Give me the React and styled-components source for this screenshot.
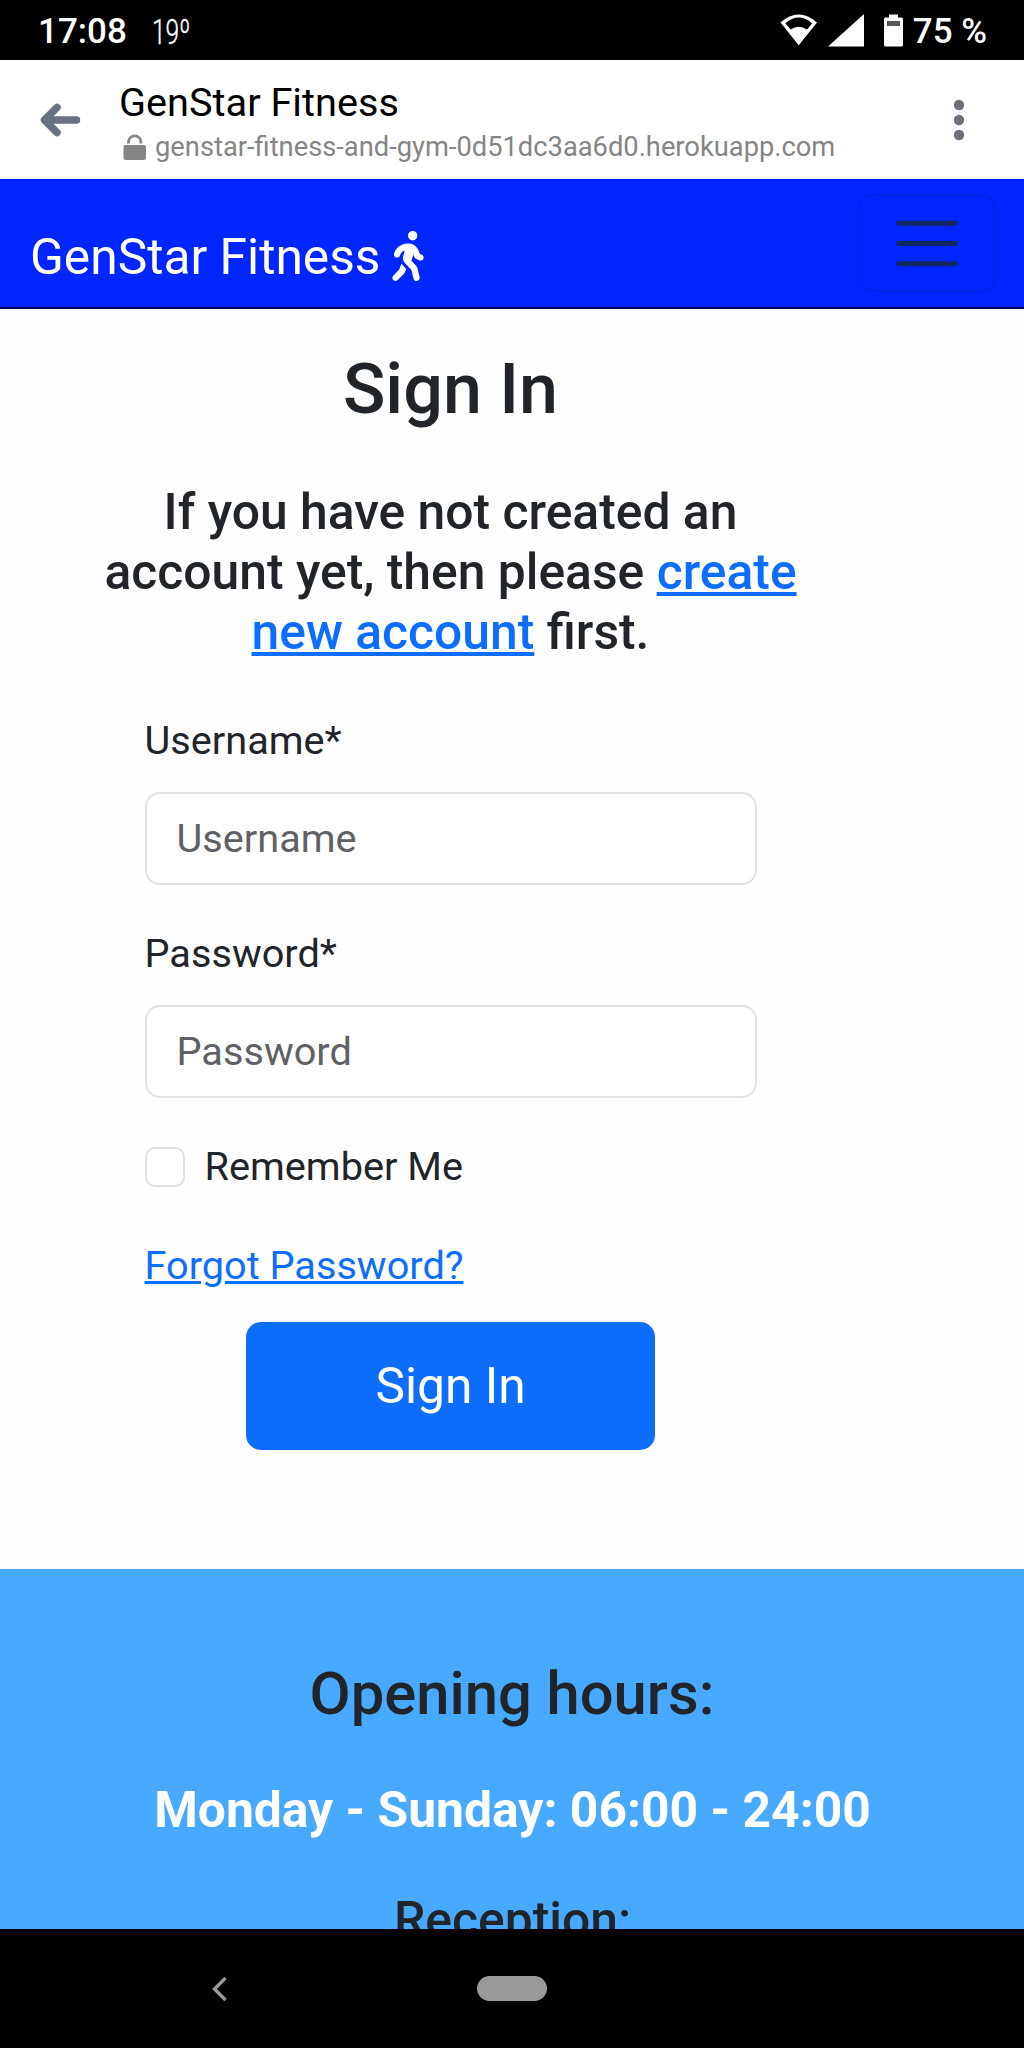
import React from "react";
import styled, { createGlobalStyle } from "styled-components";
import { FaPersonWalking } from "react-icons/fa6";

const GlobalStyle = createGlobalStyle`
  *, *::before, *::after { box-sizing: border-box; }
  body { margin: 0; background: #fefefe; font-family: Roboto, "Liberation Sans", sans-serif; color: #212529; }
  h1, h2, h3, p { margin: 0; font-weight: 500; }
`;

const Screen = styled.div`
  width: 1024px;
  height: 2048px;
  display: flex;
  flex-direction: column;
  overflow: hidden;
  background: #fefefe;
`;

const StatusBar = styled.div`
  height: 60px;
  flex: none;
  display: flex;
  align-items: center;
  justify-content: space-between;
  padding: 4px 37px 0 38px;
  background: #000;
  color: #fff;
`;

const StatusGroup = styled.div`
  display: flex;
  align-items: center;
`;

const Clock = styled.span`
  font-size: 35px;
  font-weight: 500;
  line-height: 42px;
`;

const Temperature = styled.span`
  margin-left: 25px;
  font-size: 34.5px;
  font-weight: 300;
  line-height: 42px;
  -webkit-text-stroke: 0.4px #fff;
  transform: scaleX(0.71);
  transform-origin: left;
`;

const Percent = styled.span`
  margin-left: 9px;
  font-size: 35px;
  font-weight: 500;
  line-height: 42px;
`;

const StatusIcons = styled.svg`
  display: block;
  margin-top: -5px;
`;

const BrowserBar = styled.header`
  height: 119px;
  flex: none;
  display: flex;
  align-items: center;
  padding: 0 59px 0 38px;
  background: #fff;
`;

const PageInfo = styled.div`
  flex: 1;
  margin-left: 37px;
  padding-top: 9px;
`;

const PageTitle = styled.div`
  color: #000;
  font-size: 39.7px;
  line-height: 46px;
`;

const PageAddress = styled.div`
  display: flex;
  align-items: center;
  gap: 9px;
  padding-left: 4px;
  color: #858585;
  font-size: 27.3px;
  line-height: 42px;
`;

const Navbar = styled.nav`
  height: 130px;
  flex: none;
  display: flex;
  align-items: flex-start;
  justify-content: space-between;
  padding: 15px 28px 0 30px;
  background: #0026ff;
  border-bottom: 2px solid #00055c;
`;

const Brand = styled.a`
  display: flex;
  align-items: center;
  gap: 3px;
  margin-top: 27px;
  color: #fff;
  font-size: 49.7px;
  line-height: 72px;

  svg { margin-top: -3px; }
`;

const MenuButton = styled.button`
  width: 138px;
  height: 98px;
  padding: 0;
  display: flex;
  align-items: center;
  justify-content: center;
  background: transparent;
  border: 2px solid rgba(0, 0, 60, 0.13);
  border-radius: 15px;
`;

const Main = styled.main`
  height: 1260px;
  flex: none;
  width: 901px;
  padding: 38px 90px 0;
  display: flex;
  flex-direction: column;
  align-items: center;
`;

const Heading = styled.h1`
  font-size: 70px;
  line-height: 84px;
`;

const Intro = styled.h3`
  width: 720px;
  margin-top: 52px;
  text-align: center;
  font-size: 49.8px;
  line-height: 59.8px;
`;

const Link = styled.a`
  color: #0d6efd;
  text-decoration: underline;
`;

const Form = styled.form`
  width: 612px;
  margin-top: 50px;
  display: flex;
  flex-direction: column;
  font-size: 39.7px;
  line-height: 58.6px;
`;

const Field = styled.label`
  display: flex;
  flex-direction: column;
  gap: 21px;
  margin-bottom: 40px;
`;

const Input = styled.input`
  height: 93px;
  padding: 0 30px;
  border: 2px solid #e1e2e4;
  border-radius: 15px;
  background: #fff;
  font: inherit;
  &::placeholder { color: #5f6164; opacity: 1; }
`;

const CheckRow = styled.label`
  display: flex;
  align-items: center;
  gap: 20px;
`;

const CheckBox = styled.span`
  width: 40px;
  height: 40px;
  border: 2px solid #e1e2e4;
  border-radius: 10px;
  background: #fff;
`;

const ForgotLink = styled(Link)`
  align-self: flex-start;
  margin-top: 41px;
`;

const SubmitButton = styled.button`
  align-self: center;
  width: 409px;
  height: 128px;
  margin-top: 26px;
  padding: 0;
  border: 0;
  border-radius: 15px;
  background: #0d6efd;
  color: #fff;
  font: 400 49.7px Roboto, "Liberation Sans", sans-serif;
`;

const Footer = styled.footer`
  height: 360px;
  flex: none;
  padding-top: 90px;
  overflow: hidden;
  text-align: center;
  background: #47a9ff;
`;

const FooterTitle = styled.h2`
  font-size: 59.7px;
  line-height: 70px;
`;

const Hours = styled.p`
  margin-top: 51px;
  padding-left: 1px;
  color: #fff;
  font-size: 49.8px;
  font-weight: 700;
  line-height: 60px;
`;

const FooterSubtitle = styled.h3`
  margin-top: 50px;
  padding-left: 1px;
  font-size: 49.8px;
  line-height: 60px;
`;

const SystemNav = styled.div`
  flex: 1;
  display: grid;
  grid-template-columns: 1fr 70px 1fr;
  align-items: center;
  background: #000;
`;

const BackSlot = styled.div`
  display: flex;
  padding-left: 210px;
`;

const HomePill = styled.div`
  height: 25px;
  border-radius: 13px;
  background: #999;
`;

export default function App() {
  return (
    <Screen>
      <GlobalStyle />
      <StatusBar>
        <StatusGroup>
          <Clock>17:08</Clock>
          <Temperature>19º</Temperature>
        </StatusGroup>
        <StatusGroup>
          <StatusIcons width="124" height="34" viewBox="780 12 124 34">
            <path d="M798.700 44.300L780.500 21.500Q798.700 5.500 817 21.500Z" fill="#fff" />
            <path d="M790.500 28.500L785.300 22.300Q798.700 10.800 812.200 22.300L807 28.500Q798.700 22.800 790.500 28.500Z" fill="#000" />
            <path d="M828 45.500L864 45.500L864 13Z" fill="#fff" />
            <path d="M889 13.500h9v3h3.500q1.500 0 1.500 1.500v26q0 1.500-1.500 1.500h-16q-1.500 0-1.500-1.500v-26q0-1.500 1.500-1.500h3.500z" fill="#fff" />
            <path d="M887 20h13v5h-13z" fill="#555" />
          </StatusIcons>
          <Percent>75 %</Percent>
        </StatusGroup>
      </StatusBar>
      <BrowserBar>
        <svg width="44" height="36" viewBox="38 102 44 36" fill="none" stroke="#6b7284" strokeWidth="7.500" strokeLinecap="round" strokeLinejoin="round">
          <path d="M76.500 120H45M57 107.500L44.500 120L57 132.500" />
        </svg>
        <PageInfo>
          <PageTitle>GenStar Fitness</PageTitle>
          <PageAddress>
            <svg width="23" height="27" viewBox="123 133 23 27">
              <path d="M128.500 142.500v-1.500a6.200 6.200 0 0 1 12.400 0v1.500" fill="none" stroke="#858585" strokeWidth="2.800" />
              <rect x="123.500" y="144" width="22.500" height="15" rx="2" fill="#858585" />
            </svg>
            genstar-fitness-and-gym-0d51dc3aa6d0.herokuapp.com
          </PageAddress>
        </PageInfo>
        <svg width="12" height="44" viewBox="953 98 12 44" fill="#706e7b">
          <circle cx="959" cy="105" r="5.200" />
          <circle cx="959" cy="120" r="5.200" />
          <circle cx="959" cy="135" r="5.200" />
        </svg>
      </BrowserBar>
      <Navbar>
        <Brand>
          GenStar Fitness
          <FaPersonWalking size={50} />
        </Brand>
        <MenuButton type="button" aria-label="Menu">
          <svg width="74" height="74" viewBox="0 0 30 30" fill="none" stroke="#112760" strokeWidth="2" strokeLinecap="round">
            <path d="M3.500 7h23M3.500 15.200h23M3.500 23.400h23" />
          </svg>
        </MenuButton>
      </Navbar>
      <Main>
        <Heading>Sign In</Heading>
        <Intro>
          If you have not created an account yet, then please <Link>create new account</Link> first.
        </Intro>
        <Form>
          <Field>
            Username*
            <Input placeholder="Username" />
          </Field>
          <Field>
            Password*
            <Input type="password" placeholder="Password" />
          </Field>
          <CheckRow>
            <CheckBox />
            Remember Me
          </CheckRow>
          <ForgotLink>Forgot Password?</ForgotLink>
          <SubmitButton type="button">Sign In</SubmitButton>
        </Form>
      </Main>
      <Footer>
        <FooterTitle>Opening hours:</FooterTitle>
        <Hours>Monday - Sunday: 06:00 - 24:00</Hours>
        <FooterSubtitle>Reception:</FooterSubtitle>
      </Footer>
      <SystemNav>
        <BackSlot>
          <svg width="18" height="28" viewBox="0 0 18 28" fill="none" stroke="#999" strokeWidth="3.400">
            <path d="M15.500 3L4.500 14L15.500 25" />
          </svg>
        </BackSlot>
        <HomePill />
      </SystemNav>
    </Screen>
  );
}
